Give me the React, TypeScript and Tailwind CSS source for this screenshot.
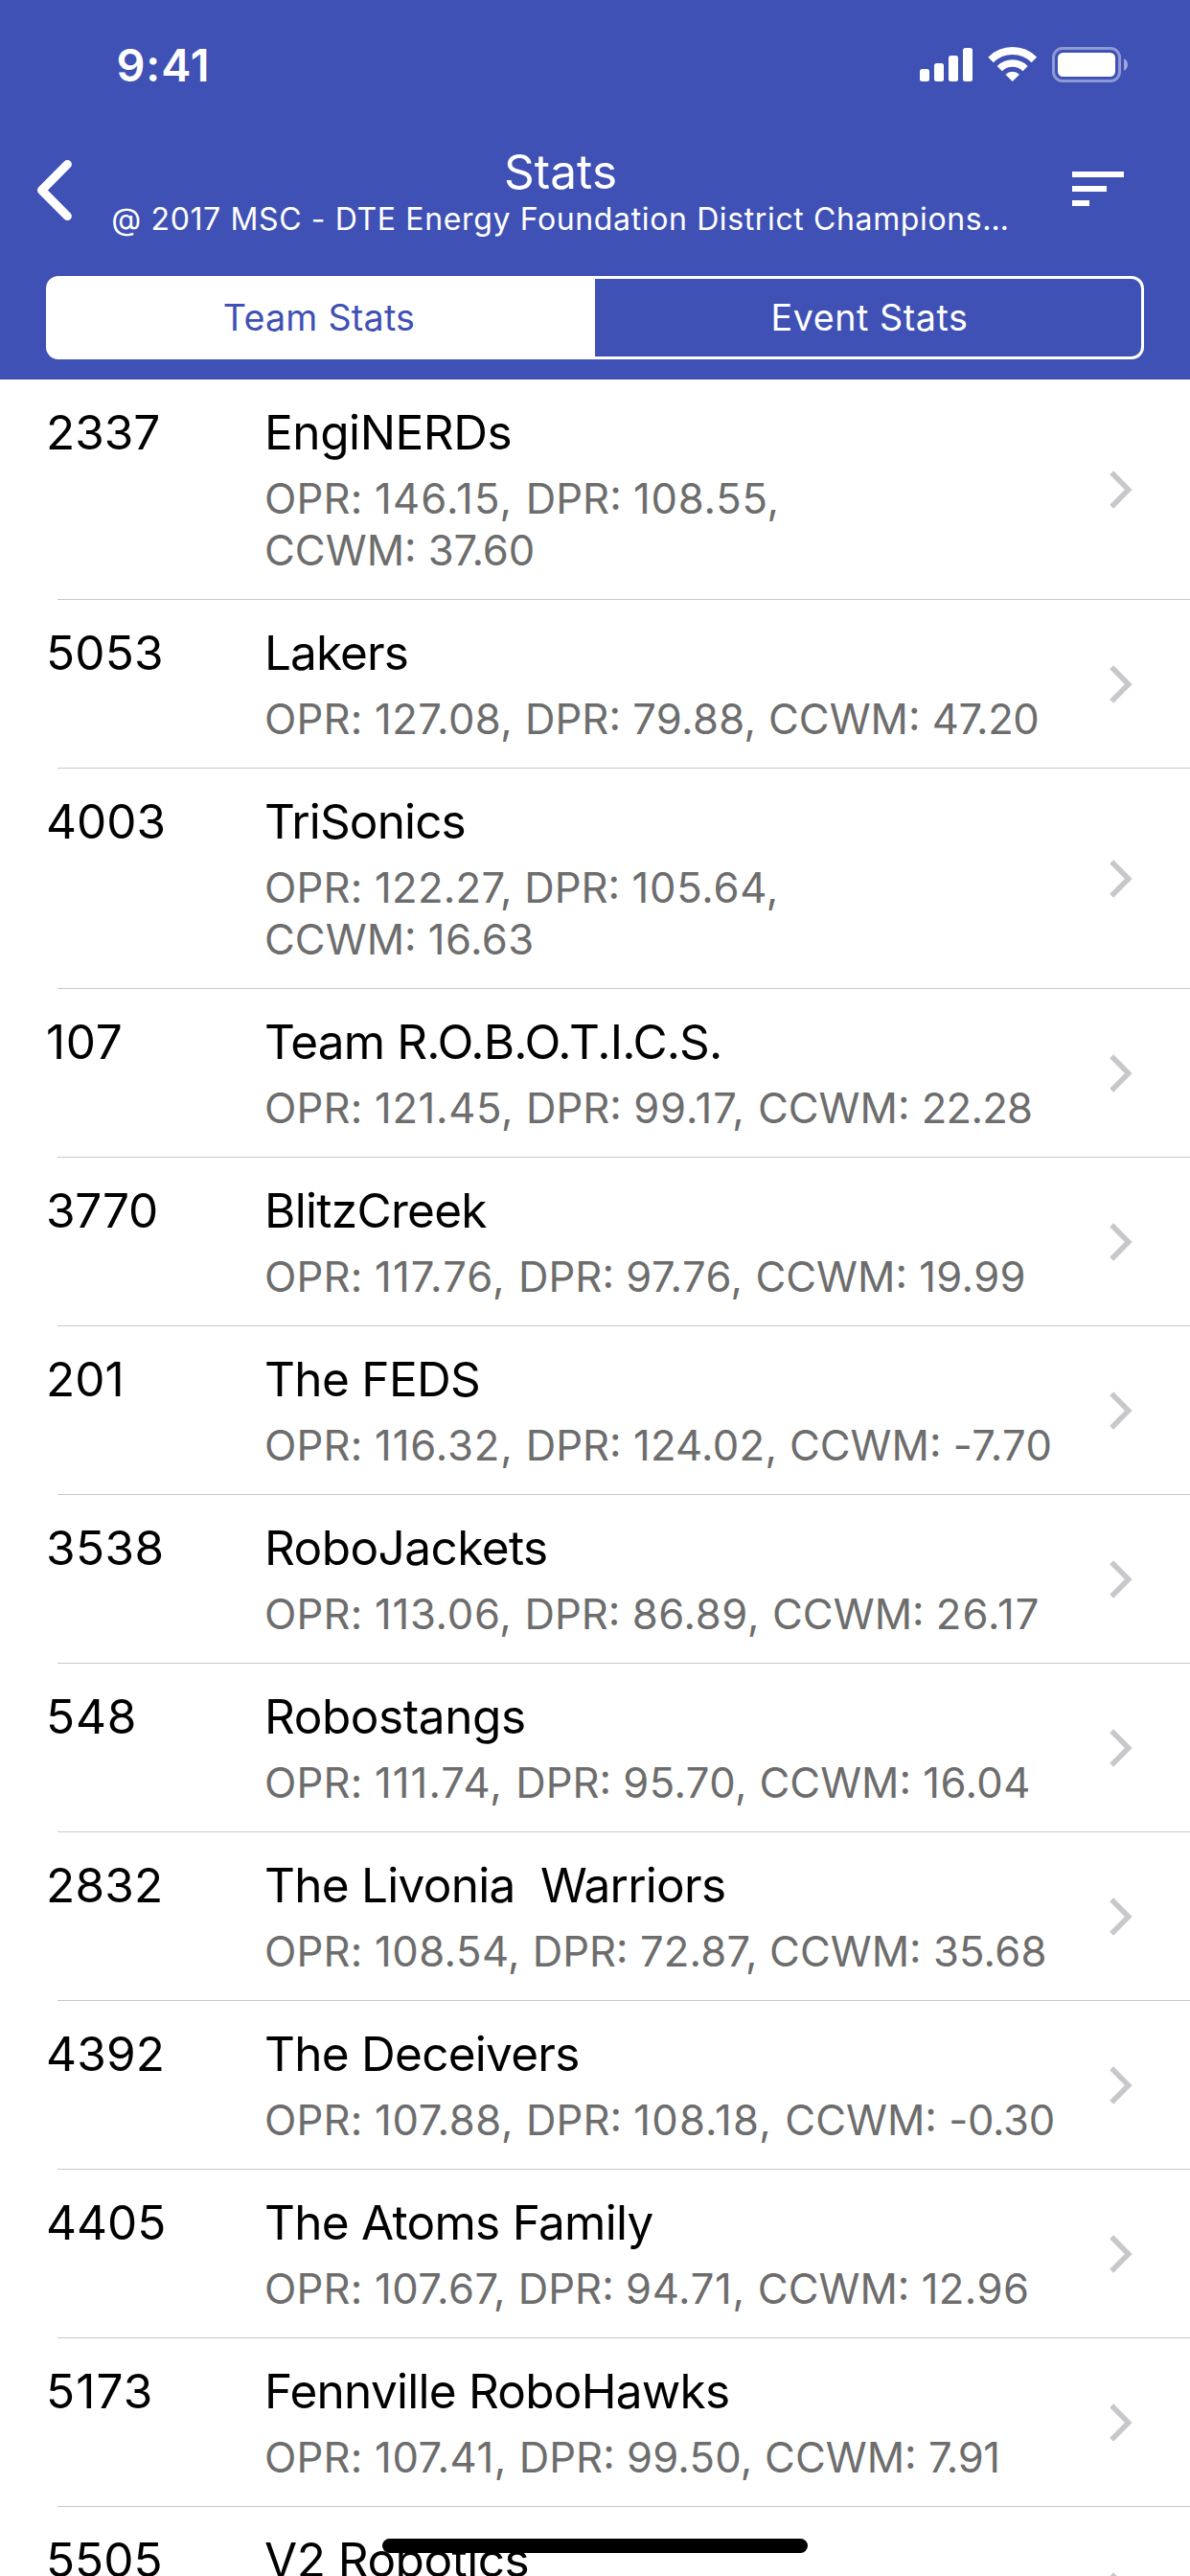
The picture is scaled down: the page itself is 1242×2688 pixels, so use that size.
type Value = { text: string; tracking: string };
type Team = {
  number: string;
  numberTracking: string;
  name: string;
  nameTracking: string;
  opr?: Value;
  dpr?: Value;
  ccwm?: Value;
  wrapped?: boolean;
};

const teams: Team[] = [
  {
    number: '2337', numberTracking: 'tracking-normal', name: 'EngiNERDs', nameTracking: 'tracking-[-0.42px]', wrapped: true,
    opr: { text: '146.15', tracking: 'tracking-[1.2px]' }, dpr: { text: '108.55', tracking: 'tracking-[0.75px]' }, ccwm: { text: '37.60', tracking: 'tracking-[-0.2px]' },
  },
  {
    number: '5053', numberTracking: 'tracking-[0.18px]', name: 'Lakers', nameTracking: 'tracking-[-0.92px]',
    opr: { text: '127.08', tracking: 'tracking-[0.46px]' }, dpr: { text: '79.88', tracking: 'tracking-[0.31px]' }, ccwm: { text: '47.20', tracking: 'tracking-[-0.53px]' },
  },
  {
    number: '4003', numberTracking: 'tracking-normal', name: 'TriSonics', nameTracking: 'tracking-[-0.87px]', wrapped: true,
    opr: { text: '122.27', tracking: 'tracking-[0.26px]' }, dpr: { text: '105.64', tracking: 'tracking-[0.75px]' }, ccwm: { text: '16.63', tracking: 'tracking-[0.4px]' },
  },
  {
    number: '107', numberTracking: 'tracking-[0.65px]', name: 'Team R.O.B.O.T.I.C.S.', nameTracking: 'tracking-[-0.86px]',
    opr: { text: '121.45', tracking: 'tracking-[0.62px]' }, dpr: { text: '99.17', tracking: 'tracking-[0.89px]' }, ccwm: { text: '22.28', tracking: 'tracking-[-0.74px]' },
  },
  {
    number: '3770', numberTracking: 'tracking-[-0.24px]', name: 'BlitzCreek', nameTracking: 'tracking-[-0.69px]',
    opr: { text: '117.76', tracking: 'tracking-[1.12px]' }, dpr: { text: '97.76', tracking: 'tracking-[0.49px]' }, ccwm: { text: '19.99', tracking: 'tracking-[0.36px]' },
  },
  {
    number: '201', numberTracking: 'tracking-normal', name: 'The FEDS', nameTracking: 'tracking-[-0.66px]',
    opr: { text: '116.32', tracking: 'tracking-[0.86px]' }, dpr: { text: '124.02', tracking: 'tracking-[0.29px]' }, ccwm: { text: '-7.70', tracking: 'tracking-[0.37px]' },
  },
  {
    number: '3538', numberTracking: 'tracking-[0.4px]', name: 'RoboJackets', nameTracking: 'tracking-[-0.57px]',
    opr: { text: '113.06', tracking: 'tracking-[0.71px]' }, dpr: { text: '86.89', tracking: 'tracking-[0.64px]' }, ccwm: { text: '26.17', tracking: 'tracking-[1.04px]' },
  },
  {
    number: '548', numberTracking: 'tracking-[0.8px]', name: 'Robostangs', nameTracking: 'tracking-[-0.42px]',
    opr: { text: '111.74', tracking: 'tracking-[1.04px]' }, dpr: { text: '95.70', tracking: 'tracking-[0.37px]' }, ccwm: { text: '16.04', tracking: 'tracking-[0.41px]' },
  },
  {
    number: '2832', numberTracking: 'tracking-[0.2px]', name: 'The Livonia  Warriors', nameTracking: 'tracking-[-0.73px]',
    opr: { text: '108.54', tracking: 'tracking-[0.44px]' }, dpr: { text: '72.87', tracking: 'tracking-[0.18px]' }, ccwm: { text: '35.68', tracking: 'tracking-[0.23px]' },
  },
  {
    number: '4392', numberTracking: 'tracking-[0.2px]', name: 'The Deceivers', nameTracking: 'tracking-[-0.74px]',
    opr: { text: '107.88', tracking: 'tracking-[0.63px]' }, dpr: { text: '108.18', tracking: 'tracking-[1.19px]' }, ccwm: { text: '-0.30', tracking: 'tracking-[-0.32px]' },
  },
  {
    number: '4405', numberTracking: 'tracking-normal', name: 'The Atoms Family', nameTracking: 'tracking-[-0.73px]',
    opr: { text: '107.67', tracking: 'tracking-[0.45px]' }, dpr: { text: '94.71', tracking: 'tracking-[0.7px]' }, ccwm: { text: '12.96', tracking: 'tracking-[0.41px]' },
  },
  {
    number: '5173', numberTracking: 'tracking-[1.14px]', name: 'Fennville RoboHawks', nameTracking: 'tracking-[-0.75px]',
    opr: { text: '107.41', tracking: 'tracking-[0.59px]' }, dpr: { text: '99.50', tracking: 'tracking-[0.2px]' }, ccwm: { text: '7.91', tracking: 'tracking-[-0.34px]' },
  },
  { number: '5505', numberTracking: 'tracking-normal', name: 'V2 Robotics', nameTracking: 'tracking-[-0.5px]' },
];

function StatusBar() {
  return (
    <div className="flex h-[132px] items-start justify-between pr-[65px] pl-[121.500px]">
      <div className="mt-[38px] text-[46.8px] leading-[60px] font-semibold tracking-[0.92px]">9:41</div>
      <div className="mt-12 flex">
        <svg width="55" height="38" viewBox="0 0 55 38" fill="currentColor">
          <rect x="0" y="24" width="10" height="13" rx="2.5" />
          <rect x="15" y="18" width="10" height="19" rx="2.5" />
          <rect x="30" y="10" width="10" height="27" rx="2.5" />
          <rect x="45" y="2" width="10" height="35" rx="2.5" />
        </svg>
        <svg className="ml-4" width="51" height="38" viewBox="0 0 51 38" fill="none">
          <path d="M3.1 14.4A31.9 31.9 0 0 1 48.3 14.4" stroke="currentColor" strokeWidth="7.8" />
          <path d="M12.3 23.6A19 19 0 0 1 39.1 23.6" stroke="currentColor" strokeWidth="7.4" />
          <path d="M25.7 37L18.4 29.7A10.3 10.3 0 0 1 33 29.7Z" fill="currentColor" />
        </svg>
        <svg className="ml-4" width="79" height="38" viewBox="0 0 79 38" fill="none">
          <rect x="1.5" y="2.5" width="69" height="34" rx="9.5" stroke="currentColor" strokeOpacity="0.42" strokeWidth="3" />
          <rect x="6" y="7" width="60" height="25" rx="5.5" fill="currentColor" />
          <path d="M75 13.2C77.5 14.2 79 16.6 79 19.5S77.5 24.8 75 25.8Z" fill="currentColor" fillOpacity="0.5" />
        </svg>
      </div>
    </div>
  );
}

function NavBar() {
  return (
    <div className="flex h-[156px]">
      <button className="flex w-[112px] items-start pt-[34px] pl-[38px]" aria-label="Back">
        <svg width="38" height="65" viewBox="0 0 38 65" fill="none">
          <path d="M32.4 5.4L5.5 32.5L32.4 59.6" stroke="currentColor" strokeWidth="9" strokeLinecap="round" strokeLinejoin="round" />
        </svg>
      </button>
      <div className="w-[946px] pt-[17px] text-center whitespace-nowrap">
        <div className="text-[49.5px] leading-[60px] tracking-[0.07px]">Stats</div>
        <div className="text-[32px] leading-[39px] tracking-[0.63px]">@ 2017 MSC - DTE Energy Foundation District Champions…</div>
      </div>
      <button className="flex flex-col items-start gap-[9px] pt-[47px] pl-[61px]" aria-label="Sort">
        <span className="h-1.5 w-[54px] bg-white" />
        <span className="h-1.5 w-9 bg-white" />
        <span className="h-1.5 w-[18px] bg-white" />
      </button>
    </div>
  );
}

function SegmentedControl() {
  return (
    <div className="mx-12 flex h-[87px] rounded-[13px] bg-white text-[37.7px]">
      <button className="w-[573px] pr-[3px] tracking-[0.22px] text-[#3f51b5]">Team Stats</button>
      <button className="my-[3px] w-[570px] rounded-r-[10px] bg-[#3f51b5] pl-[3px] tracking-[0.53px]">Event Stats</button>
    </div>
  );
}

function TeamRow({ team }: { team: Team }) {
  const { opr, dpr, ccwm } = team;
  return (
    <div className="relative flex min-h-[176px] shrink-0 items-center pr-[60px] pl-12">
      <div className={`w-[228px] self-start pt-[25px] text-[49.5px] leading-[60px] ${team.numberTracking}`}>{team.number}</div>
      <div className="flex-1 self-start pt-[25px] pb-6 whitespace-pre">
        <div className={`text-[49.5px] leading-[60px] ${team.nameTracking}`}>{team.name}</div>
        {opr && dpr && ccwm && (
          <div className="mt-[13px] text-[43.6px] leading-[54px] text-[#6d6d6d]">
            <span className="tracking-[0.2px]">{'OPR: '}</span>
            <span className={opr.tracking}>{`${opr.text}, `}</span>
            {'DPR: '}
            <span className={dpr.tracking}>{`${dpr.text}, `}</span>
            {team.wrapped && <br />}
            {'CCWM: '}
            <span className={ccwm.tracking}>{ccwm.text}</span>
          </div>
        )}
      </div>
      <svg width="24" height="40" viewBox="0 0 24 40" fill="none">
        <path d="M2.2 2.3L19.8 20L2.2 37.7" stroke="#c7c7cc" strokeWidth="5.5" />
      </svg>
      <div className="absolute right-0 bottom-0 left-[60px] h-px bg-[#c8c7cc]" />
    </div>
  );
}

export default function App() {
  return (
    <div className="relative flex h-[2688px] w-[1242px] flex-col overflow-hidden bg-white font-[Inter,sans-serif] text-black">
      <header className="h-[396px] shrink-0 bg-[#3f51b5] text-white">
        <StatusBar />
        <NavBar />
        <SegmentedControl />
      </header>
      <main className="flex flex-col">
        {teams.map((team) => (
          <TeamRow key={team.number} team={team} />
        ))}
      </main>
      <div className="absolute bottom-6 left-[399px] h-[15px] w-[444px] rounded-full bg-black" />
    </div>
  );
}
